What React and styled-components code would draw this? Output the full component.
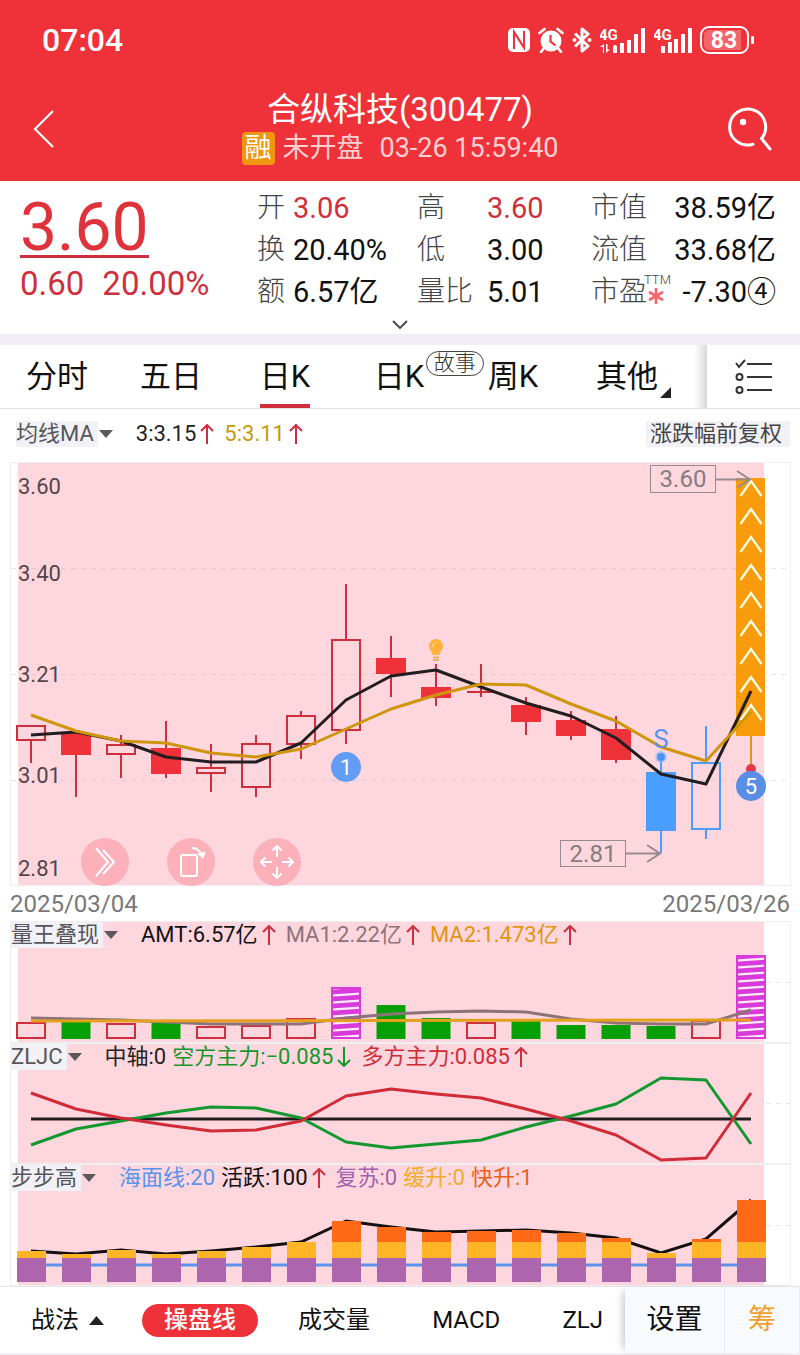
import { useState } from 'react';
import styled, { createGlobalStyle } from 'styled-components';

const RED = '#ef3239';
const DARK_RED = '#cf2f3c';
const PINK = '#fed7de';
const AMBER = '#d0950f';
const BLUE = '#4a9eff';

const CANDLE_W = 28;
const xAt = (i) => 31 + i * 45;

const stats = [
    [
        { label: '开', value: '3.06', red: true },
        { label: '换', value: '20.40%' },
        { label: '额', value: '6.57亿' },
    ],
    [
        { label: '高', value: '3.60', red: true },
        { label: '低', value: '3.00' },
        { label: '量比', value: '5.01' },
    ],
    [
        { label: '市值', value: '38.59亿' },
        { label: '流值', value: '33.68亿' },
        { label: '市盈', value: '-7.30④', ttm: true },
    ],
];

const periods = [
    { id: 'min', name: '分时' },
    { id: 'five', name: '五日' },
    { id: 'day', name: '日K' },
    { id: 'story', name: '日K', badge: '故事' },
    { id: 'week', name: '周K' },
    { id: 'other', name: '其他', more: true },
];

// top / bottom of the body, then the ends of the wick
const candles = [
    { top: 264, bottom: 278, high: 264, low: 301 },
    { top: 272, bottom: 292, high: 272, low: 335, full: true },
    { top: 283, bottom: 292, high: 273, low: 316 },
    { top: 287, bottom: 311, high: 259, low: 316, full: true },
    { top: 306, bottom: 311, high: 282, low: 330 },
    { top: 282, bottom: 325, high: 273, low: 335 },
    { top: 254, bottom: 282, high: 249, low: 297 },
    { top: 178, bottom: 268, high: 122, low: 282 },
    { top: 197, bottom: 211, high: 174, low: 235, full: true },
    { top: 226, bottom: 235, high: 202, low: 244, full: true },
    { top: 230, bottom: 230, high: 202, low: 235 },
    { top: 244, bottom: 259, high: 235, low: 273, full: true },
    { top: 259, bottom: 273, high: 249, low: 278, full: true },
    { top: 268, bottom: 297, high: 254, low: 301, full: true },
    { top: 311, bottom: 368, high: 299, low: 391, full: true, color: BLUE },
    { top: 301, bottom: 367, high: 264, low: 377, color: BLUE },
];
const ma3 = [273, 270, 279, 295, 300, 300, 281, 238, 214, 208, 225, 241, 254, 276, 312, 322, 229];
const ma5 = [253, 269, 279, 281, 291, 295, 287, 267, 247, 233, 222, 223, 242, 259, 285, 299, 250];
const priceTicks = [['3.60', 32], ['3.40', 119], ['3.21', 220], ['3.01', 321], ['2.81', 414]];

const volumes = [
    [102, 'up'], [101, 'down'], [103, 'up'], [101, 'down'], [106, 'up'], [105, 'up'],
    [98, 'up'], [67, 'king'], [84, 'down'], [97, 'down'], [102, 'up'], [100, 'down'],
    [104, 'down'], [104, 'down'], [105, 'down'], [100, 'up'], [35, 'king'],
];
const volMa1 = [97, 98, 99, 101, 103, 103, 103, 97, 93, 91, 90, 91, 98, 102, 103, 103, 89];

const bulls = [50, 66, 75, 82, 88, 87, 78, 53, 46, 51, 55, 66, 78, 92, 117, 115, 50];
const bears = [102, 86, 78, 70, 64, 65, 75, 99, 105, 101, 97, 84, 73, 61, 35, 37, 101];

const steps = [87, 90, 86, 90, 87, 83, 78, 57, 63, 68, 67, 66, 69, 74, 89, 75, 36];

const points = (values) => values.map((y, i) => `${xAt(i)},${y}`).join(' ');

function ArrowUp({ color = DARK_RED, down }) {
    return (
        <ArrowIcon viewBox="0 0 14 20" stroke={color} aria-hidden="true">
            {down ? <path d="M7 0v19M1 13l6 6 6-6" /> : <path d="M7 20V1M1 7l6-6 6 6" />}
        </ArrowIcon>
    );
}

function Legend({ name, items }) {
    return (
        <LegendRow>
            <Picker type="button">
                <span>{name}</span>
                <svg width="14" height="8" viewBox="0 0 14 8"><path d="M0 0h14L7 8z" fill="#5d575b" /></svg>
            </Picker>
            {items.map((item) => (
                <LegendItem key={item.text} $color={item.color}>
                    {item.text}
                    {item.arrow && <ArrowUp down={item.arrow === 'down'} color={item.arrowColor} />}
                </LegendItem>
            ))}
        </LegendRow>
    );
}

function Frame({ height, lines, from = 11 }) {
    return (
        <>
            <rect x="10.5" y="0.5" width="780" height={height - 1} fill="#fff" stroke="#efeef0" />
            <rect x="18" y="1" width="746" height={height - 2} fill={PINK} />
            {lines.map((y) => (
                <path key={y} d={`M${from} ${y}.5H790`} stroke="#b9a0a8" strokeOpacity="0.3" strokeDasharray="5 5" />
            ))}
        </>
    );
}

function PriceChart() {
    return (
        <Chart viewBox="0 0 800 424" role="img" aria-label="日K">
            <Frame height={424} lines={[106, 212, 318]} />
            {priceTicks.map(([text, y]) => (
                <text key={text} x="18" y={y} fontSize="22" fill="#54454b">{text}</text>
            ))}
            {candles.map((c, i) => {
                const color = c.color || (c.full ? RED : DARK_RED);
                const x = xAt(i);
                return (
                    <g key={i} stroke={c.color || DARK_RED} strokeWidth="2">
                        <path d={`M${x} ${c.high}V${c.top}M${x} ${c.bottom}V${c.low}`} />
                        {c.top === c.bottom && <path d={`M${x - 14} ${c.top}h28`} />}
                        <rect
                            x={x - CANDLE_W / 2}
                            y={c.top}
                            width={CANDLE_W}
                            height={c.bottom - c.top}
                            fill={c.full ? color : 'none'}
                            stroke={color}
                        />
                    </g>
                );
            })}
            <path d="M751 274V307" stroke="#e0961e" strokeWidth="2" />
            <circle cx="751" cy="307" r="5" fill="#e0394a" />
            <rect x="736" y="16" width="29" height="258" fill="#f89c0b" />
            <g fill="none" stroke="#fffbe0" strokeWidth="2.4">
                {[18, 46, 74, 102, 130, 158, 186, 214, 242].map((y) => (
                    <path key={y} d={`M740.500 ${y + 16}l10.500 -15 10.500 15`} />
                ))}
            </g>
            <g fill="none" strokeWidth="3" strokeLinejoin="round">
                <polyline points={points(ma3)} stroke="#221d20" />
                <polyline points={points(ma5)} stroke={AMBER} />
            </g>

            <path d="M436 177a7 7 0 0 1 7 7c0 4-3 5-3.500 9h-7c-.5-4-3.500-5-3.500-9a7 7 0 0 1 7-7z" fill="#fdb23c" />
            <path d="M433 195.500h6M433 198h6" stroke="#f0a040" strokeWidth="1.500" />
            <path d="M432.500 185a4 4 0 0 1 3-4" stroke="#ffe2a8" fill="none" />

            <text x="661" y="286" fontSize="26" textAnchor="middle" fill="#5a94ea">S</text>
            <circle cx="661" cy="295" r="6" fill="#8cbcf8" opacity="0.6" />
            <circle cx="661" cy="295" r="4" fill="#4a94f4" />

            <circle cx="346" cy="305" r="15" fill="#629cf5" />
            <text x="346" y="313" fontSize="22" textAnchor="middle" fill="#fff">1</text>
            <circle cx="751" cy="324" r="15" fill="#5a8ee6" />
            <text x="751" y="332" fontSize="22" textAnchor="middle" fill="#fff">5</text>

            <g fill="none" stroke="#968b90">
                <rect x="650.500" y="3.500" width="65" height="27" />
                <rect x="560.500" y="378.500" width="65" height="26" />
                <path d="M716 17.500h33M737 9l13 8.500-13 8M626 391.500h34M647 383l13 8.500-13 8.500" strokeWidth="2" />
            </g>
            <g fontSize="24" textAnchor="middle" fill="#857c80">
                <text x="683" y="25">3.60</text>
                <text x="593" y="400">2.81</text>
            </g>
        </Chart>
    );
}

function VolumeChart() {
    return (
        <Chart viewBox="0 0 800 122" role="img" aria-label="量王叠现">
            <defs>
                <pattern id="king" x="8" width="45" height="7" patternUnits="userSpaceOnUse">
                    <rect width="45" height="7" fill="#d93bdb" />
                    <path d="M0 5.200L45 2.200" stroke="#fdeafd" strokeWidth="2.200" />
                </pattern>
            </defs>
            <Frame height={122} lines={[61]} from={766} />
            {volumes.map(([y, kind], i) => {
                const x = xAt(i) - CANDLE_W / 2;
                if (kind === 'up') {
                    return <rect key={i} x={x} y={y} width={CANDLE_W} height={117 - y} fill="none" stroke={DARK_RED} strokeWidth="2" />
                }
                if (kind === 'king') {
                    return <rect key={i} x={x} y={y} width={CANDLE_W} height={117 - y} fill="url(#king)" stroke="#d93bdb" strokeWidth="2" />
                }
                return <rect key={i} x={x - 0.5} y={y} width={CANDLE_W + 1} height={118 - y} fill="#06a006" />
            })}
            <polyline points={points(volMa1)} fill="none" stroke="#8d7379" strokeWidth="3" />
            <path d="M31 100L751 99" stroke="#e5a01d" strokeWidth="3" />
        </Chart>
    );
}

function ForceChart() {
    return (
        <Chart viewBox="0 0 800 121" role="img" aria-label="ZLJC">
            <Frame height={121} lines={[60]} from={766} />
            <g fill="none" strokeWidth="3" strokeLinejoin="round">
                <path d="M31 76H751" stroke="#221d20" />
                <polyline points={points(bears)} stroke="#12982f" />
                <polyline points={points(bulls)} stroke="#d02c38" />
            </g>
        </Chart>
    );
}

function StepChart() {
    return (
        <Chart viewBox="0 0 800 122" role="img" aria-label="步步高">
            <Frame height={122} lines={[61]} from={766} />
            <path d="M31 101H751" stroke="#5b93ea" strokeWidth="3" />
            <polyline points={points(steps)} fill="none" stroke="#141012" strokeWidth="3" />
            {steps.map((y, i) => {
                const x = xAt(i) - 14;
                return (
                    <g key={i}>
                        {y < 78 && <rect x={x} y={y} width="29" height={78 - y} fill="#ff6a17" />}
                        <rect x={x} y={Math.max(y, 78)} width="29" height={94 - Math.max(y, 78)} fill="#ffb525" />
                        <rect x={x} y="94" width="29" height="24" fill="#ad65ad" />
                    </g>
                );
            })}
        </Chart>
    );
}

function StatusIcons() {
    return (
        <StatusTray>
            <svg width="22" height="24" viewBox="0 0 22 24">
                <rect width="22" height="24" rx="5" fill="#fff" />
                <path d="M6 21V4l9.500 15M16 3v16.500L6.500 4.500" fill="none" stroke={RED} strokeWidth="2" />
            </svg>
            <svg width="26" height="26" viewBox="0 0 26 26">
                <circle cx="13" cy="14" r="10.500" fill="#fff" />
                <path d="M1.500 6l5-4M24.500 6l-5-4M6 21l-3 4M20 21l3 4" stroke="#fff" strokeWidth="2.600" strokeLinecap="round" />
                <path d="M12.500 8v6.500l5 4" fill="none" stroke={RED} strokeWidth="2.200" />
            </svg>
            <svg width="20" height="26" viewBox="0 0 20 26">
                <path d="M3 6.500L16 19l-6 5V2l6 5L3 19.500" fill="none" stroke="#fff" strokeWidth="3" strokeLinejoin="round" />
                <circle cx="2.500" cy="13" r="2" fill="#fff" />
                <circle cx="17.500" cy="13" r="2" fill="#fff" />
            </svg>
            <svg width="46" height="26" viewBox="0 0 46 26" fill="#fff">
                <text x="-1" y="13" fontSize="15" fontWeight="700">4G</text>
                <path d="M13 20a2 2 0 0 1 4 0v6h-4zM20 16h4v10h-4zM27 13h4v13h-4zM34 7h4v19h-4zM41 1h4v25h-4z" />
                <path d="M3 26v-6H0l4-3v9zM6 17v9l4-3.500H7.500V17z" />
            </svg>
            <svg width="38" height="26" viewBox="0 0 38 26" fill="#fff">
                <text x="-1" y="13" fontSize="15" fontWeight="700">4G</text>
                <path d="M7 19h4v7H7zM14 15h4v11h-4zM20 12h4v14h-4zM27 7h4v19h-4zM34 1h4v25h-4z" />
            </svg>
            <svg width="54" height="28" viewBox="0 0 54 28">
                <rect x="1" y="1" width="47" height="26" rx="8" fill="none" stroke="#fff" strokeWidth="2" />
                <path d="M9 4h32v20H9a5 5 0 0 1-5-5V9a5 5 0 0 1 5-5z" fill="#fff" opacity="0.25" />
                <rect x="51" y="10" width="3" height="8" rx="1" fill="#fff" />
                <text x="24" y="22" fontSize="23" fontWeight="700" textAnchor="middle" fill="#fff">83</text>
            </svg>
        </StatusTray>
    );
}

function App() {
    const [period, setPeriod] = useState('day');

    return (
        <Page>
            <GlobalStyle />
            <Header>
                <StatusBar>
                    <Clock>07:04</Clock>
                    <StatusIcons />
                </StatusBar>
                <Nav>
                    <IconButton type="button" aria-label="返回">
                        <svg width="32" height="42" viewBox="0 0 32 42" fill="none" stroke="#fff" strokeWidth="2.200">
                            <path d="M25 3L7 21l18 18" />
                        </svg>
                    </IconButton>
                    <TitleBlock>
                        <h1>合纵科技(300477)</h1>
                        <p>
                            <Margin>融</Margin>
                            <span>未开盘</span>
                            <time>03-26 15:59:40</time>
                        </p>
                    </TitleBlock>
                    <IconButton type="button" aria-label="搜索">
                        <svg width="44" height="44" viewBox="0 0 44 44" fill="none" stroke="#fff" strokeWidth="3">
                            <path d="M25 37.200A18 18 0 1 1 33.500 31.500L42 42" strokeLinecap="round" strokeLinejoin="round" />
                            <circle cx="15" cy="15" r="3.200" fill="#fff" stroke="none" />
                        </svg>
                    </IconButton>
                </Nav>
            </Header>

            <Quote>
                <PriceBlock>
                    <strong>3.60</strong>
                    <p><span>0.60</span><span>20.00%</span></p>
                </PriceBlock>
                {stats.map((column, index) => (
                    <StatColumn key={index} $column={index}>
                        {column.map((item) => (
                            <Stat key={item.label} $red={item.red}>
                                <dt>
                                    {item.label}
                                    {item.ttm && (
                                        <Ttm>
                                            TTM
                                            <svg width="18" height="18" viewBox="0 0 18 18" stroke="#f9636b" strokeWidth="2.600">
                                                <path d="M9 1v16M2 5l14 8M16 5L2 13" />
                                            </svg>
                                        </Ttm>
                                    )}
                                </dt>
                                <dd>{item.value}</dd>
                            </Stat>
                        ))}
                    </StatColumn>
                ))}
                <Expand type="button" aria-label="展开">
                    <svg width="16" height="10" viewBox="0 0 16 10" fill="none" stroke="#444" strokeWidth="1.800">
                        <path d="M1 1l7 7 7-7" />
                    </svg>
                </Expand>
            </Quote>

            <Tabs>
                <TabList>
                    {periods.map((tab) => (
                        <Tab key={tab.id} type="button" $active={tab.id === period} onClick={() => setPeriod(tab.id)}>
                            <span>
                                {tab.name}
                                {tab.badge && <StoryBadge>{tab.badge}</StoryBadge>}
                                {tab.more && <Corner width="11" height="11" viewBox="0 0 11 11"><path d="M11 0v11H0z" fill="#222" /></Corner>}
                            </span>
                        </Tab>
                    ))}
                </TabList>
                <TabSettings type="button" aria-label="指标列表">
                    <svg width="38" height="38" viewBox="0 0 38 38" fill="none" stroke="#333" strokeWidth="2">
                        <path d="M12 6h25M12 19h25M12 32h25M1 5l3 4 6-7" />
                        <circle cx="4.500" cy="19" r="3" />
                        <circle cx="4.500" cy="32" r="3" />
                    </svg>
                </TabSettings>
            </Tabs>

            <MaRow>
                <Legend
                    name="均线MA"
                    items={[
                        { text: '3:3.15', color: '#222', arrow: 'up' },
                        { text: '5:3.11', color: '#c49a10', arrow: 'up' },
                    ]}
                />
                <Adjust type="button">涨跌幅前复权</Adjust>
            </MaRow>

            <Panel>
                <PriceChart />
                <Tools>
                    <Tool type="button" aria-label="前进">
                        <svg width="28" height="32" viewBox="0 0 28 32"><path d="M5 2l12 14L5 30M12 4l11 12-11 12" /></svg>
                    </Tool>
                    <Tool type="button" aria-label="旋转屏幕">
                        <svg width="28" height="32" viewBox="0 0 28 32">
                            <rect x="4" y="9" width="16" height="21" rx="2" />
                            <path d="M15 2c5 0 8 2 10 8" />
                            <path d="M21 8l5 4 2-6z" fill="white" strokeWidth="1" />
                        </svg>
                    </Tool>
                    <Tool type="button" aria-label="移动">
                        <svg width="34" height="34" viewBox="0 0 34 34">
                            <path d="M17 12V2M12.500 5.500L17 1l4.500 4.500M17 22v10M12.500 28.500L17 33l4.500-4.500M12 17H2M5.500 12.500L1 17l4.500 4.500M22 17h10M28.500 12.500L33 17l-4.500 4.500" />
                        </svg>
                    </Tool>
                </Tools>
            </Panel>
            <Dates>
                <time>2025/03/04</time>
                <time>2025/03/26</time>
            </Dates>

            <Panel>
                <VolumeChart />
                <Legend
                    name="量王叠现"
                    items={[
                        { text: 'AMT:6.57亿', color: '#111', arrow: 'up' },
                        { text: 'MA1:2.22亿', color: '#8d7379', arrow: 'up' },
                        { text: 'MA2:1.473亿', color: '#e0960f', arrow: 'up' },
                    ]}
                />
            </Panel>
            <Panel>
                <ForceChart />
                <Legend
                    name="ZLJC"
                    items={[
                        { text: '中轴:0', color: '#222' },
                        { text: '空方主力:−0.085', color: '#16962c', arrow: 'down', arrowColor: '#16962c' },
                        { text: '多方主力:0.085', color: '#d02c38', arrow: 'up' },
                    ]}
                />
            </Panel>
            <Panel>
                <StepChart />
                <Legend
                    name="步步高"
                    items={[
                        { text: '海面线:20', color: '#5b93ea' },
                        { text: '活跃:100', color: '#111', arrow: 'up' },
                        { text: '复苏:0', color: '#a261ae' },
                        { text: '缓升:0', color: '#f0ab2c' },
                        { text: '快升:1', color: '#ea5f1c' },
                    ]}
                />
            </Panel>

            <BottomBar>
                <Tactics type="button">
                    战法
                    <svg width="15" height="9" viewBox="0 0 15 9"><path d="M0 9h15L7.500 0z" fill="#222" /></svg>
                </Tactics>
                <Pill type="button">操盘线</Pill>
                <Indicators>
                    <button type="button">成交量</button>
                    <button type="button">MACD</button>
                    <button type="button">ZLJ</button>
                </Indicators>
                <SideButtons>
                    <SideButton type="button" $width="100px">设置</SideButton>
                    <SideButton type="button" $width="75px" $accent>筹</SideButton>
                </SideButtons>
            </BottomBar>
        </Page>
    );
}

export default App;


// & CSS COMPONENTS

const GlobalStyle = createGlobalStyle`
    *{
        box-sizing: border-box;
        margin: 0;
    }

    body{
        background-color: #fff;
        color: #111;
        font-family: Roboto, 'Noto Sans CJK SC', sans-serif;
    }

    button{
        padding: 0;
        border: none;
        background: none;
        color: inherit;
        font: inherit;
        cursor: pointer;
        white-space: nowrap;
    }

    svg{
        display: block;
        flex-shrink: 0;
    }
`

const Page = styled.div`
    display: flex;
    flex-direction: column;
    width: 100%;
`

const Header = styled.header`
    background-color: ${RED};
    color: white;
`

const StatusBar = styled.div`
    display: flex; justify-content: space-between; align-items: center;
    height: 80px;
    padding: 0 46px 0 42px;
`

const Clock = styled.time`
    font-size: 32px;
    font-weight: 500;
`

const StatusTray = styled.div`
    display: flex; align-items: center;
    gap: 8px;
`

const Nav = styled.nav`
    display: flex; justify-content: space-between; align-items: center;
    height: 101px;
    padding: 0 28px 4px;
`

const IconButton = styled.button`
    width: 44px;
    height: 44px;
`

const TitleBlock = styled.div`
    text-align: center;

    h1{
        font-size: 33px;
        font-weight: 400;
        line-height: 36px;
    }

    p{
        display: flex; justify-content: center; align-items: center;
        gap: 8px;
        margin-top: 4px;
        color: #ffd0d2;
        font-size: 27px;
        line-height: 33px;
    }

    time{
        margin-left: 8px;
    }
`

const Margin = styled.span`
    width: 33px;
    height: 33px;
    border-radius: 4px;
    background-color: #f0960f;
    color: white;
`

const Quote = styled.section`
    display: grid;
    grid-template-columns: 237fr 160fr 174fr 185fr;
    position: relative;
    height: 153px;
    padding: 6px 24px 0 20px;
`

const PriceBlock = styled.div`
    color: ${DARK_RED};

    strong{
        display: inline-block;
        height: 71px;
        border-bottom: 3px solid ${DARK_RED};
        color: #e0323a;
        font-size: 66px;
        font-weight: 400;
        line-height: 82px;
    }

    p{
        display: flex;
        gap: 18px;
        margin-top: 6px;
        font-size: 33px;
        line-height: 40px;
    }
`

const StatColumn = styled.dl`
    dt{
        width: ${(props) => ['36px', '70px', 'auto'][props.$column]};
    }

    dd{
        margin-left: ${(props) => (props.$column === 2 ? 'auto' : '0')};
    }
`

const Stat = styled.div`
    display: flex;
    line-height: 42px;
    white-space: nowrap;

    dt{
        position: relative;
        color: #444;
        font-size: 28px;
        font-weight: 300;
    }

    dd{
        color: ${(props) => (props.$red ? DARK_RED : '#111')};
        font-size: 29px;
    }
`

const Ttm = styled.sup`
    position: absolute;
    top: 2px; left: 53px;
    font-size: 13px;
    line-height: 14px;

    svg{
        margin-left: 3px;
    }
`

const Expand = styled.button`
    position: absolute;
    bottom: 4px; left: 50%;
    transform: translateX(-50%);
`

const Tabs = styled.div`
    display: flex;
    height: 75px;
    border-top: 11px solid #f3eef5;
    border-bottom: 1px solid #e4e4e6;
`

const TabList = styled.div`
    display: flex;
    flex: 1;
    padding-right: 22px;
    background: linear-gradient(to left, #dcdcde, #fff 12px);
`

const Tab = styled.button`
    flex: 1;
    font-size: 31px;

    > span{
        display: inline-block;
        position: relative;
        height: 63px;
        border-bottom: 4px solid ${(props) => (props.$active ? DARK_RED : 'transparent')};
        line-height: 64px;
    }
`

const StoryBadge = styled.em`
    position: absolute;
    top: 6px; left: 52px;
    width: 58px;
    height: 25px;
    border: 1px solid #444;
    border-radius: 13px;
    color: #333;
    font-size: 21px;
    font-style: normal;
    font-weight: 300;
    line-height: 22px;
`

const Corner = styled.svg`
    position: absolute;
    right: -13px; bottom: 6px;
`

const TabSettings = styled.button`
    display: flex; justify-content: center; align-items: center;
    width: 94px;
    border-left: 1px solid #dcdcde;
`

const LegendRow = styled.div`
    display: flex; align-items: center;
    height: 26px;
    font-size: 22px;
    line-height: 26px;
    white-space: nowrap;
`

const Picker = styled.button`
    display: flex; align-items: center;
    gap: 1px;
    margin-right: 23px;
    color: #55555a;

    span{
        padding-right: 4px;
        background-color: #f2f1f7;
    }
`

const LegendItem = styled.span`
    display: flex; align-items: center;
    margin-right: 6px;
    color: ${(props) => props.$color};
`

const ArrowIcon = styled.svg`
    width: 14px;
    height: 20px;
    margin: 0 4px;
    fill: none;
    stroke-width: 2;
`

const MaRow = styled.div`
    display: flex; justify-content: space-between; align-items: center;
    height: 53px;
    padding: 0 10px 4px 16px;
`

const Adjust = styled.button`
    padding: 0 8px 0 4px;
    background-color: #f2f1f7;
    color: #444;
    font-size: 22px;
    line-height: 26px;
`

// the chart and what lies over it share one grid cell
const Panel = styled.section`
    display: grid;

    > *{
        grid-area: 1 / 1;
    }

    ${LegendRow}{
        margin: 1px 0 0 11px;
    }
`

const Chart = styled.svg`
    width: 100%;
    height: auto;
`

const Tools = styled.div`
    display: flex;
    align-self: end;
    gap: 38px;
    padding-left: 81px;
`

const Tool = styled.button`
    display: flex; justify-content: center; align-items: center;
    width: 48px;
    height: 48px;
    border-radius: 50%;
    background-color: #fcb0ba;

    svg{
        fill: none;
        stroke: white;
        stroke-width: 2;
    }
`

const Dates = styled.div`
    display: flex; justify-content: space-between;
    height: 35px;
    padding: 0 10px;
    color: #77777a;
    font-size: 24px;
    line-height: 36px;
`

const BottomBar = styled.nav`
    display: flex; align-items: center;
    height: 69px;
    border-top: 1px solid #e6e6ea;
    border-bottom: 2px solid #f1f0f4;
    font-size: 24px;
    line-height: 32px;
`

const Indicators = styled.div`
    display: flex; justify-content: space-between;
    flex: 1;
    padding: 0 22px 0 40px;
`

const Tactics = styled.button`
    display: flex; align-items: center;
    gap: 10px;
    padding: 0 38px 0 31px;
`

const Pill = styled.button`
    width: 116px;
    height: 33px;
    border-radius: 17px;
    background-color: ${RED};
    color: white;
    font-weight: 500;
`

const SideButtons = styled.div`
    display: flex;
    height: 100%;
    box-shadow: -6px 0 8px -4px #c4c4c8;
`

const SideButton = styled.button`
    width: ${(props) => props.$width};
    border-right: 1px solid #e8ebf2;
    background-color: #f7fafe;
    color: ${(props) => (props.$accent ? '#f0a028' : '#111')};
    font-size: 28px;
`
